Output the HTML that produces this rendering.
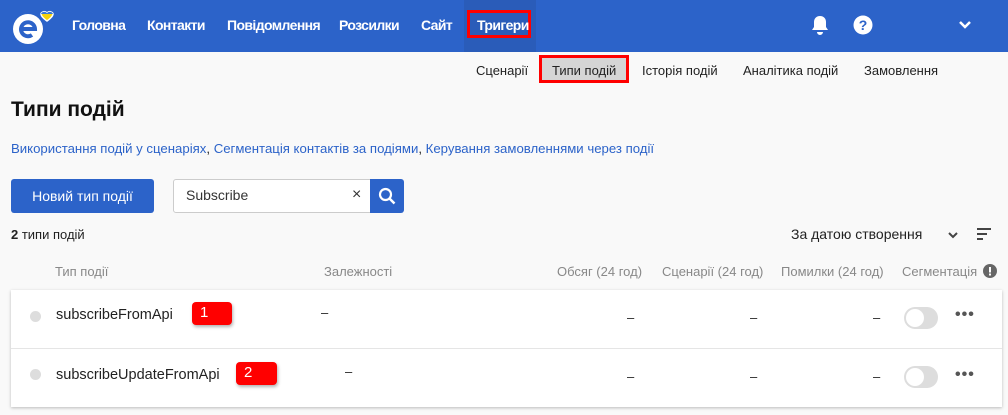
<!DOCTYPE html>
<html><head><meta charset="utf-8"><style>
*{box-sizing:border-box;margin:0;padding:0}
body{width:1008px;height:415px;overflow:hidden;background:#f9f9f9;font-family:"Liberation Sans",sans-serif;color:#222;position:relative;font-size:14px}
.a{position:absolute;white-space:nowrap}
.nav{position:absolute;left:0;top:0;width:1008px;height:52px;background:#2c63c9}
.nav .i{position:absolute;top:17px;color:#fff;font-size:14px;font-weight:bold;letter-spacing:-0.6px}
.sub{font-size:13px;color:#222;top:63px}
.hd{font-size:13px;color:#888;top:264px}
.card{position:absolute;left:11px;width:991px;background:#fff;box-shadow:0 1px 3px rgba(0,0,0,.25)}
.tog{position:absolute;width:34px;height:22px;border-radius:11px;background:#ddd}
.tog:after{content:"";position:absolute;left:2px;top:2px;width:18px;height:18px;border-radius:9px;background:#fff}
.dash{font-size:13px}
.badge{position:absolute;background:#f00;color:#fff;font-size:15px;border-radius:4px;height:23px;padding:2px 8px;box-shadow:1px 2px 3px rgba(0,0,0,.3)}
.dots{font-size:16px;font-weight:bold;letter-spacing:1px;color:#555}
</style></head><body>
<div class="nav">
<svg class="a" style="left:10px;top:7px" width="48" height="38" viewBox="0 0 48 38"><circle cx="18" cy="22" r="15" fill="#fff"/><path d="M10 22h15a7 7 0 1 0-3 6" stroke="#2c63c9" stroke-width="4" fill="none"/><path d="M37 6c-3-3-6 0-6 1 0 3 6 7 6 7s6-4 6-7c0-1-3-4-6-1z" fill="#f6d30a" stroke="#fff" stroke-width="1.5"/><path d="M31 7c0-1 3-4 6-1 3-3 6 0 6 1z" fill="#3a7bd5"/></svg>
<div class="i" style="left:72px">Головна</div>
<div class="i" style="left:147px">Контакти</div>
<div class="i" style="left:227px">Повідомлення</div>
<div class="i" style="left:339px">Розсилки</div>
<div class="i" style="left:421px">Сайт</div>
<div class="a" style="left:464px;top:0;width:72px;height:52px;background:#2a5cb9"></div>
<div class="a" style="left:467px;top:10px;width:64px;height:28px;border:3px solid #f00"></div>
<div class="i" style="left:477px">Тригери</div>
<svg class="a" style="left:810px;top:14px" width="20" height="22" viewBox="0 0 20 22"><path d="M10 2c-4 0-6 3-6 6v5l-2 3h16l-2-3V8c0-3-2-6-6-6z M7 18a3 3 0 0 0 6 0z" fill="#fff"/></svg>
<svg class="a" style="left:853px;top:15px" width="20" height="20"><circle cx="10" cy="10" r="9.5" fill="#fff"/><text x="10" y="15" font-size="14" font-weight="bold" text-anchor="middle" fill="#2c63c9" font-family="Liberation Sans">?</text></svg>
<svg class="a" style="left:958px;top:20px" width="14" height="10"><path d="M2 2l5 5 5-5" stroke="#fff" stroke-width="2.5" fill="none"/></svg>
</div>
<div class="a sub" style="left:476px">Сценарії</div>
<div class="a" style="left:539px;top:55px;width:90px;height:28px;border:3px solid #f00;background:#d5d5d5"></div>
<div class="a sub" style="left:552px">Типи подій</div>
<div class="a sub" style="left:642px">Історія подій</div>
<div class="a sub" style="left:743px">Аналітика подій</div>
<div class="a sub" style="left:864px">Замовлення</div>
<div class="a" style="left:11px;top:98px;font-size:21px;font-weight:bold;color:#111">Типи подій</div>
<div class="a" style="left:11px;top:141px;font-size:13.2px;color:#2c63c9">Використання подій у сценаріях<span style="color:#222">,</span> Сегментація контактів за подіями<span style="color:#222">,</span> Керування замовленнями через події</div>
<div class="a" style="left:11px;top:179px;width:143px;height:34px;background:#2c63c9;border-radius:3px;color:#fff;font-size:14px;text-align:center;line-height:34px">Новий тип події</div>
<div class="a" style="left:173px;top:179px;width:198px;height:34px;background:#fff;border:1px solid #ccc;border-radius:3px 0 0 3px"></div>
<div class="a" style="left:186px;top:187px;font-size:14px;color:#333">Subscribe</div>
<div class="a" style="left:352px;top:186px;font-size:16px;color:#333">×</div>
<div class="a" style="left:370px;top:179px;width:34px;height:34px;background:#2c63c9;border-radius:0 3px 3px 0"></div>
<svg class="a" style="left:378px;top:187px" width="18" height="18"><circle cx="7.5" cy="7.5" r="5.5" stroke="#fff" stroke-width="2.2" fill="none"/><path d="M11.5 11.5l5 5" stroke="#fff" stroke-width="2.5"/></svg>
<div class="a" style="left:11px;top:227px;font-size:13px"><b>2</b> типи подій</div>
<div class="a" style="left:791px;top:226px;font-size:14px;color:#222">За датою створення</div>
<svg class="a" style="left:947px;top:231px" width="12" height="8"><path d="M2 2l4 4 4-4" stroke="#444" stroke-width="2" fill="none"/></svg>
<svg class="a" style="left:977px;top:228px" width="14" height="12"><path d="M0 1h14M0 6h10M0 11h6" stroke="#444" stroke-width="2"/></svg>
<div class="a hd" style="left:55px">Тип події</div>
<div class="a hd" style="left:324px">Залежності</div>
<div class="a hd" style="left:557px">Обсяг (24 год)</div>
<div class="a hd" style="left:662px">Сценарії (24 год)</div>
<div class="a hd" style="left:781px">Помилки (24 год)</div>
<div class="a hd" style="left:902px">Сегментація</div>
<svg class="a" style="left:983px;top:264px" width="14" height="14"><circle cx="7" cy="7" r="7" fill="#666"/><rect x="6" y="3" width="2" height="5.5" fill="#fff"/><rect x="6" y="9.5" width="2" height="2" fill="#fff"/></svg>
<div class="card" style="top:290px;height:117px"></div>
<div class="a" style="left:11px;top:348px;width:991px;height:1px;background:#e5e5e5"></div>
<div class="a" style="left:30px;top:311px;width:11px;height:11px;border-radius:6px;background:#ddd"></div>
<div class="a" style="left:56px;top:307px;font-size:14.5px">subscribeFromApi</div>
<div class="badge" style="left:192px;top:302px;width:40px">1</div>
<div class="a dash" style="left:321px;top:305px">–</div>
<div class="a dash" style="left:627px;top:310px">–</div>
<div class="a dash" style="left:750px;top:310px">–</div>
<div class="a dash" style="left:873px;top:310px">–</div>
<div class="tog" style="left:904px;top:307px"></div>
<div class="a dots" style="left:955px;top:306px">•••</div>
<div class="a" style="left:30px;top:369px;width:11px;height:11px;border-radius:6px;background:#ddd"></div>
<div class="a" style="left:56px;top:367px;font-size:14.5px">subscribeUpdateFromApi</div>
<div class="badge" style="left:236px;top:362px;width:41px">2</div>
<div class="a dash" style="left:345px;top:364px">–</div>
<div class="a dash" style="left:627px;top:369px">–</div>
<div class="a dash" style="left:750px;top:369px">–</div>
<div class="a dash" style="left:873px;top:369px">–</div>
<div class="tog" style="left:904px;top:366px"></div>
<div class="a dots" style="left:955px;top:366px">•••</div>
</body></html>
